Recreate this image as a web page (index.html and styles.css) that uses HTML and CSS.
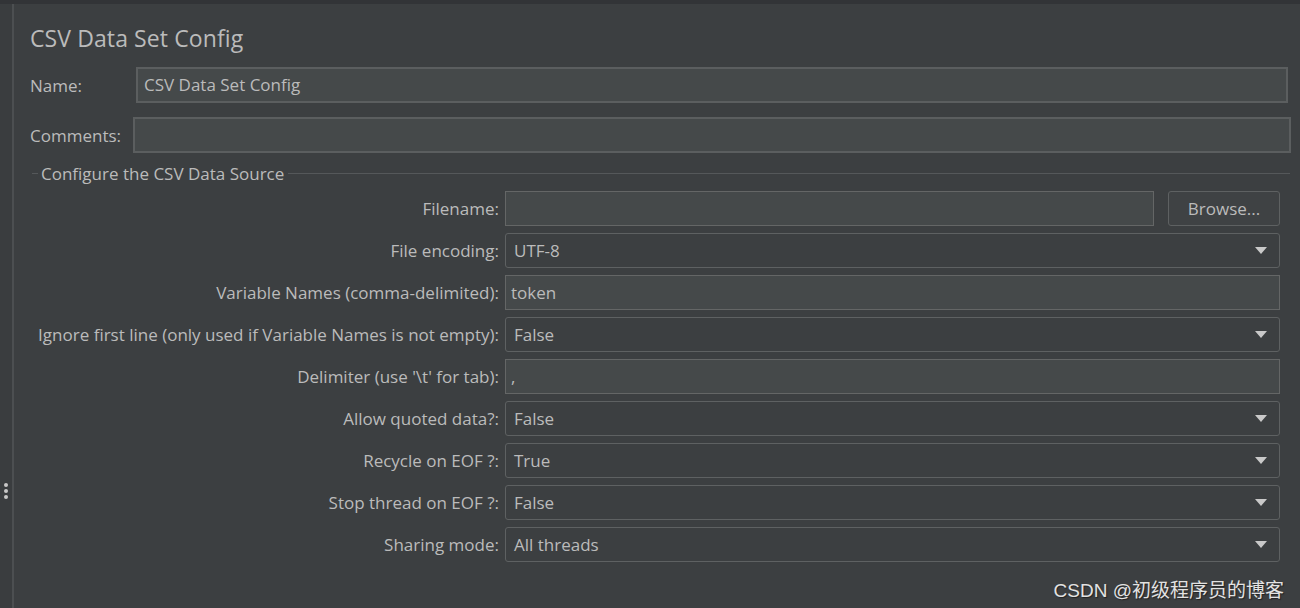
FILE: index.html
```html
<!DOCTYPE html>
<html>
<head>
<meta charset="utf-8">
<link rel="stylesheet" href="styles.css">
</head>
<body>
<div class="top-bar"></div>
<div class="main">
  <div class="side-strip">
    <div class="grip"><span></span><span></span><span></span></div>
  </div>
  <div class="content">
    <h1 class="title">CSV Data Set Config</h1>
    <div class="row name-row">
      <label class="lbl name-lbl">Name:</label>
      <div class="field">CSV Data Set Config</div>
    </div>
    <div class="row comments-row">
      <label class="lbl comments-lbl">Comments:</label>
      <div class="field"></div>
    </div>
    <div class="group">
      <div class="legend"><span class="legend-dash"></span><span class="legend-text">Configure the CSV Data Source</span><span class="legend-line"></span></div>
      <div class="form">
        <div class="flbl">Filename:</div>
        <div class="fctl file-ctl"><div class="field"></div><div class="btn">Browse...</div></div>

        <div class="flbl">File encoding:</div>
        <div class="fctl"><div class="combo"><span>UTF-8</span><i class="arrow"></i></div></div>

        <div class="flbl">Variable Names (comma-delimited):</div>
        <div class="fctl"><div class="field">token</div></div>

        <div class="flbl">Ignore first line (only used if Variable Names is not empty):</div>
        <div class="fctl"><div class="combo"><span>False</span><i class="arrow"></i></div></div>

        <div class="flbl">Delimiter (use '\t' for tab):</div>
        <div class="fctl"><div class="field">,</div></div>

        <div class="flbl">Allow quoted data?:</div>
        <div class="fctl"><div class="combo"><span>False</span><i class="arrow"></i></div></div>

        <div class="flbl">Recycle on EOF ?:</div>
        <div class="fctl"><div class="combo"><span>True</span><i class="arrow"></i></div></div>

        <div class="flbl">Stop thread on EOF ?:</div>
        <div class="fctl"><div class="combo"><span>False</span><i class="arrow"></i></div></div>

        <div class="flbl">Sharing mode:</div>
        <div class="fctl"><div class="combo"><span>All threads</span><i class="arrow"></i></div></div>
      </div>
    </div>
  </div>
</div>
<div class="watermark">CSDN @初级程序员的博客</div>
</body>
</html>
```

FILE: styles.css
```css
html, body {
  margin: 0;
  padding: 0;
}
body {
  width: 1300px;
  height: 608px;
  overflow: hidden;
  background: #3c3f41;
  font-family: "Open Sans", "Noto Sans", sans-serif;
  color: #bbbbbb;
  position: relative;
}
.top-bar {
  height: 4px;
  background: #323437;
}
.main {
  display: flex;
  height: 604px;
}
.side-strip {
  width: 12px;
  background: #3a3d3f;
  border-right: 2px solid #4c4f51;
  display: flex;
  align-items: flex-start;
  justify-content: center;
}
.grip {
  margin-top: 479px;
  display: flex;
  flex-direction: column;
  gap: 2px;
}
.grip span {
  width: 4px;
  height: 4px;
  border-radius: 50%;
  background: #c8c8c8;
}
.content {
  flex: 1;
  padding-left: 16px;
}
.title {
  margin: 19px 0 0 0;
  font-weight: normal;
  font-size: 23px;
  line-height: 30px;
  color: #bbbbbb;
  letter-spacing: 0.1px;
}
.row {
  display: flex;
  align-items: center;
}
.name-row {
  margin-top: 14px;
  padding-right: 12px;
}
.comments-row {
  margin-top: 14px;
  padding-right: 9px;
}
.lbl {
  font-size: 17px;
}
.name-lbl { width: 106px; }
.comments-lbl { width: 103px; }
.field {
  flex: 1;
  height: 34px;
  box-sizing: border-box;
  background: #45494a;
  border: 1px solid #646666;
  font-size: 17px;
  line-height: 32px;
  padding-left: 6px;
  color: #bbbbbb;
}
.name-row .field, .comments-row .field {
  height: 36px;
  border: 2px solid #5b5e5f;
  line-height: 32px;
}
.group {
  margin-top: 9px;
  padding-right: 10px;
}
.legend {
  display: flex;
  align-items: center;
  height: 22px;
}
.legend-dash {
  width: 6px;
  height: 1px;
  background: #55585a;
  margin-left: 2px;
}
.legend-text {
  font-size: 17px;
  padding: 0 4px 0 3px;
}
.legend-line {
  flex: 1;
  height: 1px;
  background: #55585a;
}
.form {
  display: grid;
  grid-template-columns: 469px 1fr;
  column-gap: 6px;
  row-gap: 7px;
  margin-top: 7px;
  padding-right: 10px;
}
.flbl {
  text-align: right;
  font-size: 17px;
  line-height: 35px;
  white-space: nowrap;
}
.fctl {
  display: flex;
  height: 35px;
}
.fctl .field {
  height: 35px;
  border: 1px solid #646666;
  line-height: 33px;
  padding-left: 5px;
}
.file-ctl {
  gap: 14px;
}
.btn {
  width: 112px;
  box-sizing: border-box;
  border: 1px solid #5e6162;
  border-radius: 3px;
  background: #3f4244;
  font-size: 17px;
  line-height: 33px;
  text-align: center;
  color: #bbbbbb;
}
.combo {
  flex: 1;
  box-sizing: border-box;
  border: 1px solid #5e6162;
  border-radius: 3px;
  background: #3c3f41;
  display: flex;
  align-items: center;
  justify-content: space-between;
  padding: 0 12px 0 8px;
  font-size: 17px;
}
.arrow {
  width: 0;
  height: 0;
  border-left: 6px solid transparent;
  border-right: 6px solid transparent;
  border-top: 7px solid #c9c9c9;
}
.watermark {
  position: absolute;
  right: 16px;
  top: 575px;
  font-family: "Liberation Sans", "Noto Sans CJK SC", sans-serif;
  font-size: 19px;
  color: #e2e2e2;
  text-shadow: 1px 1px 1px #222;
}
```
